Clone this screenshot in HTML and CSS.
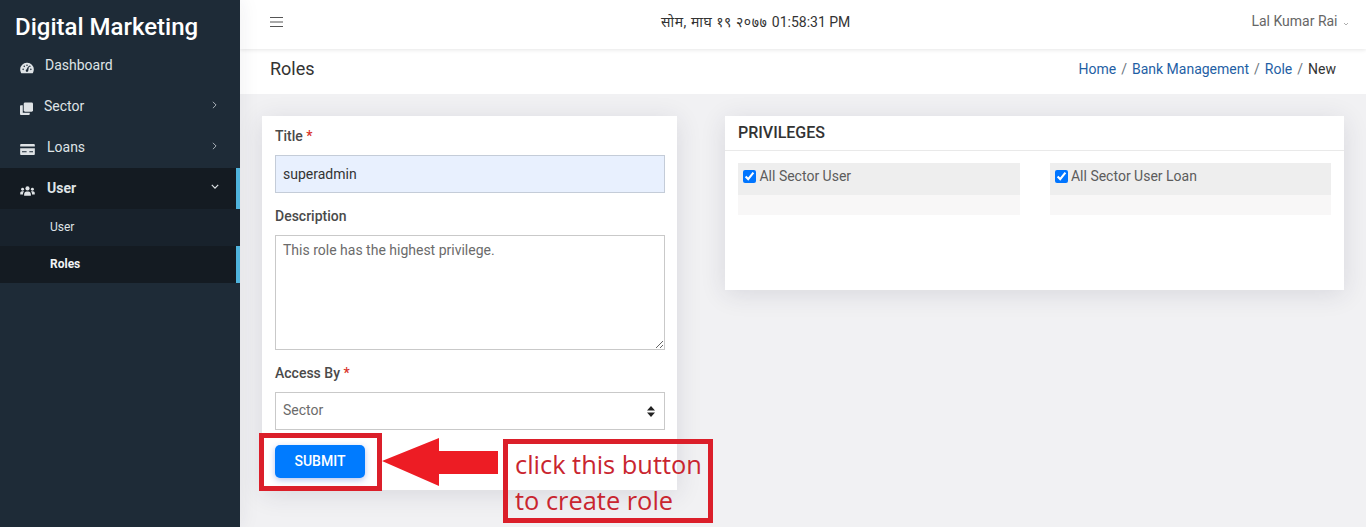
FILE: index.html
```html
<!DOCTYPE html>
<html>

<head>
    <meta charset="UTF-8">
    <title>Roles</title>
    <link rel="stylesheet" href="styles.css">
</head>

<body>
    <aside class="sidebar">
        <div class="brand">Digital Marketing</div>
        <nav>
            <a class="nav-item item-dashboard">
                <svg class="nav-icon" viewBox="0 0 16 14" width="14" height="12"><path fill="#dfe3e6" fill-rule="evenodd" d="M8 1a7.6 7.6 0 0 0-8 7.6c0 1.500.4 2.900 1.100 4.100.2.300.5.300.7.300h12.400c.2 0 .5 0 .7-.3.700-1.200 1.100-2.600 1.100-4.100A7.600 7.600 0 0 0 8 1zM8 2.800a.9.900 0 1 1 0 1.800.9.900 0 0 1 0-1.800zM3.500 9.500a.9.900 0 1 1 0-1.800.9.900 0 0 1 0 1.800zM4.800 6a.9.900 0 1 1 0-1.800.9.900 0 0 1 0 1.800zM9.300 10.800a1.500 1.500 0 0 1-2.700-.4c-.2-.7.200-1.300.8-1.600L9.500 5l.8.300-.8 4.200c.1.400 0 .900-.2 1.300zM11.300 6a.9.900 0 1 1 0-1.800.9.900 0 0 1 0 1.800zM12.500 9.500a.9.900 0 1 1 0-1.800.9.900 0 0 1 0 1.800z"/></svg>
                <span class="label">Dashboard</span>
            </a>
            <a class="nav-item item-sector">
                <svg class="nav-icon" viewBox="0 0 14 14" width="13" height="13"><rect x="4" y="0.500" width="10" height="10" rx="1.500" fill="#dfe3e6"/><path fill="#dfe3e6" d="M3 3.500v8h7.500V13a1 1 0 0 1-1 1H1a1 1 0 0 1-1-1V4.500a1 1 0 0 1 1-1z"/></svg>
                <span class="label">Sector</span>
                <svg class="caret" viewBox="0 0 6 10" width="5" height="8"><path d="M1 1l4 4-4 4" fill="none" stroke="#aeb6bc" stroke-width="1.200"/></svg>
            </a>
            <a class="nav-item item-loans">
                <svg class="nav-icon" viewBox="0 0 16 12" width="15" height="11"><path fill="#dfe3e6" d="M0 1.200C0 .600.500 0 1.200 0h13.600c.7 0 1.200.600 1.200 1.200V2.600H0zM0 4.600h16v6.200c0 .6-.5 1.200-1.200 1.200H1.200C.5 12 0 11.400 0 10.800zM2 8v1h5V8zm8 0v1h4V8z"/></svg>
                <span class="label">Loans</span>
                <svg class="caret" viewBox="0 0 6 10" width="5" height="8"><path d="M1 1l4 4-4 4" fill="none" stroke="#aeb6bc" stroke-width="1.200"/></svg>
            </a>
            <a class="nav-item item-user active">
                <svg class="nav-icon" viewBox="0 0 16 11" width="15" height="10"><g fill="#dfe3e6"><circle cx="8" cy="2.700" r="2.300"/><circle cx="2.600" cy="3.500" r="1.600"/><circle cx="13.400" cy="3.500" r="1.600"/><path d="M4.300 10.800V9c0-1.700 1.300-3 2.600-3h2.200c1.300 0 2.600 1.300 2.600 3v1.800zM0 9.300V7.800C0 6.500.900 5.700 2 5.700h1.200c.4 0 .7.100 1 .3C3.300 6.800 3 7.800 3 9.300zM16 9.300V7.800c0-1.300-.9-2.100-2-2.100h-1.200c-.4 0-.7.100-1 .3.900.8 1.200 1.800 1.200 3.300z"/></g></svg>
                <span class="label">User</span>
                <svg class="caret" viewBox="0 0 10 6" width="8" height="5"><path d="M1 1l4 4 4-4" fill="none" stroke="#dfe3e6" stroke-width="1.500"/></svg>
            </a>
            <a class="sub-item">User</a>
            <a class="sub-item current">Roles</a>
        </nav>
    </aside>

    <div class="wrapper">
        <header class="topbar">
            <svg class="burger" viewBox="0 0 13 10" width="13" height="10"><path d="M0 .500h13M0 5h13M0 9.500h13" stroke="#555" stroke-width="1"/></svg>
            <div class="clock"><span class="clock-date">सोम, माघ १९ २०७७</span> 01:58:31 PM</div>
            <div class="account">Lal Kumar Rai <svg viewBox="0 0 6 4" width="6" height="4"><path d="M1 1l2 2 2-2" fill="none" stroke="#999" stroke-width=".8"/></svg></div>
        </header>

        <div class="page-head">
            <h1>Roles</h1>
            <ol class="crumbs">
                <li><a>Home</a></li>
                <li><a>Bank Management</a></li>
                <li><a>Role</a></li>
                <li>New</li>
            </ol>
        </div>

        <main class="content">
            <form class="card role-form">
                <div class="field">
                    <label>Title <span class="req">*</span></label>
                    <input class="control filled" type="text" value="superadmin">
                </div>
                <div class="field">
                    <label>Description</label>
                    <textarea class="control area">This role has the highest privilege.</textarea>
                </div>
                <div class="field last">
                    <label>Access By <span class="req">*</span></label>
                    <select class="control picker">
                        <option>Sector</option>
                    </select>
                </div>
                <button class="submit" type="button">SUBMIT</button>
            </form>

            <section class="card privileges">
                <h2>PRIVILEGES</h2>
                <div class="priv-grid">
                    <div class="priv">
                        <label class="priv-head"><input type="checkbox" checked> All Sector User</label>
                    </div>
                    <div class="priv">
                        <label class="priv-head"><input type="checkbox" checked> All Sector User Loan</label>
                    </div>
                </div>
            </section>
        </main>
    </div>

    <!-- annotation drawn on top of the screenshot -->
    <div class="mark-box"></div>
    <svg class="mark-arrow" viewBox="0 0 116 48" width="116" height="48"><path fill="#ed1c24" d="M0 23L57 0v13h59v23H57v12z"/></svg>
    <div class="mark-note">click this button<br>to create role</div>
</body>

</html>
```

FILE: styles.css
```css
* {
    box-sizing: border-box;
}

html,
body {
    height: 100%;
}

body {
    margin: 0;
    display: flex;
    height: 527px;
    overflow: hidden;
    position: relative;
    font-family: Roboto, "Noto Sans", sans-serif;
    font-size: 14px;
    color: #444;
    background: #f1f1f3;
}

/* sidebar */
.sidebar {
    width: 240px;
    flex-shrink: 0;
    background: #1e2b37;
    color: #dfe3e6;
    position: relative;
    z-index: 2;
    box-shadow: 0 0 20px rgba(40, 40, 70, .08);
}

.brand {
    height: 46px;
    padding: 11px 0 0 15px;
    font-size: 24px;
    line-height: 33px;
    font-weight: 500;
    color: #fff;
}

.nav-item {
    display: flex;
    align-items: center;
    height: 41px;
    padding: 0 23px 0 20px;
    position: relative;
}

.nav-icon {
    flex-shrink: 0;
    margin-top: 4px;
}

.item-dashboard {
    height: 40px;
}

.item-dashboard .label {
    margin-left: 11px;
}

.item-sector .label {
    margin-left: 11px;
}

.item-loans .label {
    margin-left: 12px;
}

.item-user .label {
    margin-left: 12px;
    font-weight: 700;
}

.label {
    margin-top: -2px;
}

.caret {
    margin-left: auto;
    margin-top: -4px;
}

.active {
    background: #141b22;
    border-right: 4px solid #4fb3dc;
    padding-right: 17px;
}

.sub-item {
    display: block;
    height: 37px;
    line-height: 36px;
    padding-left: 50px;
    font-size: 12px;
    background: #18222c;
}

.sub-item.current {
    background: #141b22;
    border-right: 4px solid #4fb3dc;
    font-weight: 700;
    color: #f2f4f5;
}

/* top bar and page heading */
.wrapper {
    flex: 1;
    min-width: 0;
}

.topbar {
    height: 49px;
    background: #fff;
    display: flex;
    align-items: center;
    padding: 0 17px 6px 30px;
    position: relative;
    box-shadow: 0 1px 4px rgba(0, 0, 0, .1);
}

.clock {
    margin-left: 378px;
    color: #333;
    font-size: 14px;
}

.clock-date {
    letter-spacing: .55px;
    margin-right: 1px;
}

.account {
    margin-left: auto;
    margin-top: -2px;
    color: #666;
    font-size: 14px;
}

.account svg {
    margin-left: 2px;
}

.page-head {
    height: 45px;
    background: #fff;
    display: flex;
    justify-content: space-between;
    align-items: center;
    padding: 0 30px 6px;
}

.page-head h1 {
    margin: 0;
    font-size: 18px;
    font-weight: 400;
    color: #333;
}

.crumbs {
    display: flex;
    margin: 0;
    padding: 0;
    list-style: none;
    color: #333;
}

.crumbs li+li::before {
    content: "/";
    padding: 0 5px;
    color: #6c757d;
}

.crumbs a {
    color: #1f5fa5;
}

/* cards */
.content {
    display: flex;
    align-items: flex-start;
    padding: 22px 22px 0;
    gap: 48px;
}

.card {
    background: #fff;
    box-shadow: 0 4px 24px rgba(40, 40, 70, .12);
}

.role-form {
    width: 415px;
    padding: 10px 12px 12px 13px;
}

.field {
    margin-bottom: 13px;
}

.field.last {
    margin-bottom: 15px;
}

.field label {
    display: block;
    height: 21px;
    line-height: 21px;
    margin-bottom: 8px;
    font-weight: 500;
    color: #4a4a4a;
}

.req {
    color: #d9332a;
}

.control {
    display: block;
    width: 100%;
    height: 38px;
    padding: 0 7px;
    border: 1px solid #c9c9c9;
    border-radius: 0;
    background: #fff;
    font-family: inherit;
    font-size: 14px;
    color: #6b6b6b;
}

.control.filled {
    background: #e8f0fe;
    border-color: #c4ccd8;
    color: #333;
}

.control.area {
    height: 115px;
    padding-top: 5px;
    line-height: 18px;
}

.control.picker {
    appearance: none;
    padding-bottom: 2px;
    background: #fff url("data:image/svg+xml,%3Csvg xmlns='http://www.w3.org/2000/svg' width='8' height='11'%3E%3Cpath fill='%23222' d='M4 0l4 4.500H0zM4 11L0 6.500h8z'/%3E%3C/svg%3E") no-repeat right 9px center;
}

.submit {
    display: block;
    width: 90px;
    height: 33px;
    padding: 0 0 2px;
    border: 0;
    border-radius: 5px;
    background: #007bff;
    color: #fff;
    font-family: inherit;
    font-size: 14px;
    font-weight: 500;
    box-shadow: 0 2px 6px rgba(0, 60, 200, .3);
}

.privileges {
    width: 619px;
    height: 174px;
}

.privileges h2 {
    margin: 0;
    height: 35px;
    padding: 0 13px;
    line-height: 33px;
    font-size: 16px;
    font-weight: 500;
    color: #333;
    border-bottom: 1px solid #e9e9e9;
}

.priv-grid {
    display: grid;
    grid-template-columns: 1fr 1fr;
    gap: 30px;
    padding: 12px 13px;
}

.priv {
    height: 52px;
    background: #f8f7f7;
}

.priv-head {
    display: block;
    height: 32px;
    padding: 3px 5px;
    line-height: 20px;
    background: #eee;
    color: #5c5c5c;
}

.priv-head input {
    margin: 0;
    width: 13px;
    height: 13px;
    vertical-align: -2px;
}

/* annotation */
.mark-box {
    position: absolute;
    left: 259px;
    top: 433px;
    width: 123px;
    height: 58px;
    border: 5px solid #db1f2a;
}

.mark-arrow {
    position: absolute;
    left: 382px;
    top: 438px;
}

.mark-note {
    position: absolute;
    left: 503px;
    top: 439px;
    width: 210px;
    height: 84px;
    padding: 2px 0 0 7px;
    border: 5px solid #db1f2a;
    font-family: "Open Sans", sans-serif;
    font-size: 25.4px;
    line-height: 36px;
    color: #c9252f;
    white-space: nowrap;
}
```
